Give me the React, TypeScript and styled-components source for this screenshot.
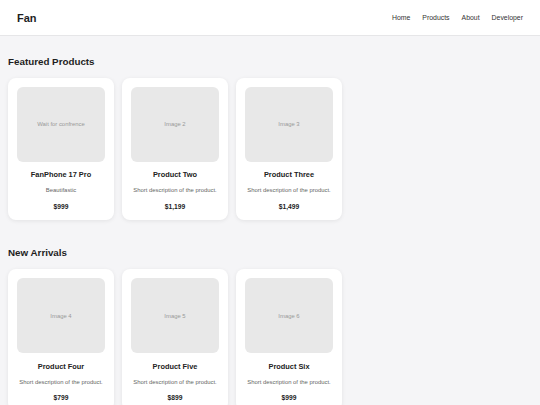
import React from "react";
import styled, { createGlobalStyle } from "styled-components";

const Global = createGlobalStyle`
  html, body { margin: 0; padding: 0; background: #f5f5f7; }
  body { font-family: "Liberation Sans", Arial, Helvetica, sans-serif; color: #222; }
  * { box-sizing: border-box; }
`;

const Header = styled.header`
  height: 36px;
  background: #ffffff;
  border-bottom: 1px solid #e6e6e8;
  display: flex;
  align-items: center;
  justify-content: space-between;
  padding: 0 17px;
`;

const Logo = styled.div`
  font-size: 11px;
  font-weight: 700;
  color: #1e1e1e;
  padding-top: 1px;
`;

const Nav = styled.nav`
  display: flex;
  gap: 12px;
`;

const NavLink = styled.a`
  font-size: 6.9px;
  color: #333;
  text-decoration: none;
  &:visited { color: #333; }
`;

const Section = styled.section`
  padding: 19.5px 8px 8px;
`;

const Heading = styled.h2`
  margin: 0 0 10.5px;
  font-size: 9.8px;
  line-height: 11.7px;
  font-weight: 700;
  color: #1e1e1e;
`;

const Grid = styled.div`
  display: grid;
  grid-template-columns: repeat(3, 106px);
  gap: 8px;
`;

const Card = styled.div`
  background: #ffffff;
  border-radius: 8px;
  box-shadow: 0 1px 4px rgba(0, 0, 0, 0.08);
  padding: 9px 9px 9px;
  display: flex;
  flex-direction: column;
  align-items: center;
  text-align: center;
  height: 142px;
`;

const ImageBox = styled.div`
  width: 88px;
  height: 75.5px;
  border-radius: 6px;
  background: #e8e8e8;
  display: flex;
  align-items: center;
  justify-content: center;
  font-size: 5.9px;
  color: #999;
`;

const Title = styled.h3`
  margin: 7.5px 0 0;
  font-size: 7.4px;
  line-height: 12px;
  font-weight: 700;
  color: #222;
`;

const Desc = styled.p`
  margin: 5px 0 0;
  font-size: 5.9px;
  line-height: 8px;
  color: #666;
`;

const Price = styled.div`
  margin-top: 7.5px;
  font-size: 6.7px;
  line-height: 9px;
  font-weight: 700;
  color: #222;
`;

type Product = { img: string; title: string; desc: string; price: string };

const featured: Product[] = [
  { img: "Wait for confrence", title: "FanPhone 17 Pro", desc: "Beautifastic", price: "$999" },
  { img: "Image 2", title: "Product Two", desc: "Short description of the product.", price: "$1,199" },
  { img: "Image 3", title: "Product Three", desc: "Short description of the product.", price: "$1,499" },
];

const arrivals: Product[] = [
  { img: "Image 4", title: "Product Four", desc: "Short description of the product.", price: "$799" },
  { img: "Image 5", title: "Product Five", desc: "Short description of the product.", price: "$899" },
  { img: "Image 6", title: "Product Six", desc: "Short description of the product.", price: "$999" },
];

const ProductSection = ({ title, items }: { title: string; items: Product[] }) => (
  <Section>
    <Heading>{title}</Heading>
    <Grid>
      {items.map((p) => (
        <Card key={p.title}>
          <ImageBox>{p.img}</ImageBox>
          <Title>{p.title}</Title>
          <Desc>{p.desc}</Desc>
          <Price>{p.price}</Price>
        </Card>
      ))}
    </Grid>
  </Section>
);

export default function App() {
  return (
    <>
      <Global />
      <Header>
        <Logo>Fan</Logo>
        <Nav>
          <NavLink href="#">Home</NavLink>
          <NavLink href="#">Products</NavLink>
          <NavLink href="#">About</NavLink>
          <NavLink href="#">Developer</NavLink>
        </Nav>
      </Header>
      <ProductSection title="Featured Products" items={featured} />
      <ProductSection title="New Arrivals" items={arrivals} />
    </>
  );
}
